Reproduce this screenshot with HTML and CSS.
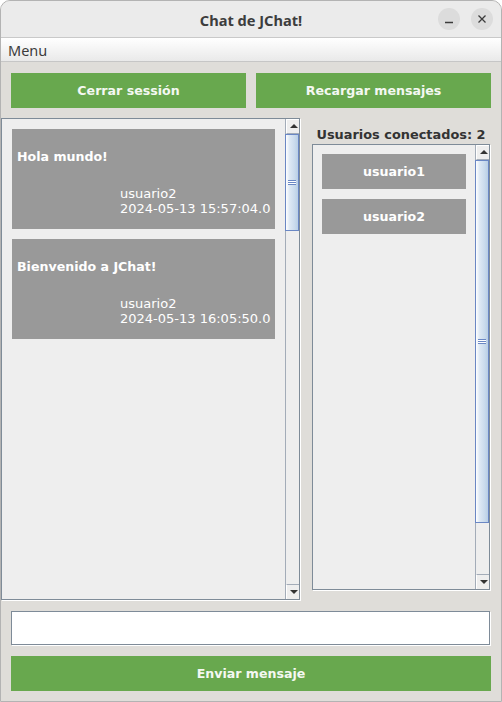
FILE: index.html
```html
<!DOCTYPE html>
<html lang="es">
<head>
<meta charset="utf-8">
<title>Chat de JChat!</title>
<link rel="stylesheet" href="styles.css">
</head>
<body>
<div class="window">
  <header class="titlebar">
    <span class="title">Chat de JChat!</span>
    <div class="controls">
      <span class="ctl"><svg width="22" height="22" viewBox="0 0 22 22"><path d="M7 14.5h8" stroke="#3b3b3b" stroke-width="1.3"/></svg></span>
      <span class="ctl"><svg width="22" height="22" viewBox="0 0 22 22"><path d="M7.5 7.5l7 7M14.5 7.5l-7 7" stroke="#3b3b3b" stroke-width="1.3"/></svg></span>
    </div>
  </header>
  <nav class="menubar"><span class="menu-item">Menu</span></nav>
  <main class="content">
    <div class="toprow">
      <button class="btn">Cerrar sessión</button>
      <button class="btn">Recargar mensajes</button>
    </div>
    <div class="middle">
      <div class="pane chat">
        <div class="viewport">
          <div class="card">
            <div class="msg">Hola mundo!</div>
            <div class="meta">usuario2<br>2024-05-13 15:57:04.0</div>
          </div>
          <div class="card">
            <div class="msg">Bienvenido a JChat!</div>
            <div class="meta">usuario2<br>2024-05-13 16:05:50.0</div>
          </div>
        </div>
        <div class="scrollbar">
          <div class="arrow up"></div>
          <div class="track"><div class="thumb thumb-chat"><span class="grip"></span></div></div>
          <div class="arrow down"></div>
        </div>
      </div>
      <div class="users">
        <div class="users-label">Usuarios conectados: 2</div>
        <div class="pane userlist">
          <div class="viewport list">
            <div class="user">usuario1</div>
            <div class="user">usuario2</div>
          </div>
          <div class="scrollbar">
            <div class="arrow up"></div>
            <div class="track"><div class="thumb thumb-users"><span class="grip"></span></div></div>
            <div class="arrow down"></div>
          </div>
        </div>
      </div>
    </div>
    <div class="input"></div>
    <button class="btn send">Enviar mensaje</button>
  </main>
</div>
</body>
</html>
```
FILE: styles.css
```css
* { box-sizing: border-box; }
html, body { margin: 0; padding: 0; background: #ffffff; }
body { width: 502px; height: 702px; overflow: hidden; }

.window {
  width: 502px;
  height: 702px;
  border: 1px solid #b3b3b3;
  border-radius: 10px 10px 0 0;
  background: #dfddd9;
  display: flex;
  flex-direction: column;
  overflow: hidden;
}

.titlebar {
  height: 37px;
  flex: none;
  background: #ebebeb;
  border-bottom: 1px solid #c9c9c9;
  position: relative;
  display: flex;
  align-items: center;
  justify-content: center;
}
.title {
  font-family: "Noto Sans", sans-serif;
  font-weight: 700;
  font-size: 14.6px;
  color: #3d3d3d;
  margin-top: 1px;
}
.controls {
  position: absolute;
  right: 8px;
  top: 7px;
  display: flex;
  gap: 11px;
}
.ctl {
  width: 22px;
  height: 22px;
  border-radius: 50%;
  background: #dcdcdc;
  display: block;
}
.ctl svg { display: block; }

.menubar {
  height: 24px;
  flex: none;
  background: linear-gradient(#ffffff, #e9e9e9);
  border-bottom: 1px solid #c6c6c6;
  display: flex;
  align-items: center;
  padding-left: 7px;
}
.menu-item {
  font-family: "Noto Sans", sans-serif;
  font-size: 14.5px;
  color: #3c3c3c;
}

.content {
  flex: 1;
  padding: 11px 10px 10px;
  display: flex;
  flex-direction: column;
}

.btn {
  border: none;
  margin: 0;
  padding: 0;
  background: #68a84e;
  color: #f4f8f2;
  font-family: "DejaVu Sans", sans-serif;
  font-weight: 700;
  font-size: 12.6px;
  height: 35px;
  cursor: pointer;
}
.toprow {
  display: flex;
  gap: 10px;
  flex: none;
}
.toprow .btn { flex: 1; }

.middle {
  display: flex;
  margin: 10px 0 0 -10px;
  height: 483px;
  flex: none;
}

.pane {
  border: 1px solid #7e8b98;
  box-shadow: 1px 1px 0 #ffffff;
  background: #eeeeee;
  display: flex;
}
.chat {
  width: 299px;
  height: 482px;
  margin-right: 12px;
}
.viewport {
  flex: 1;
  padding: 10px 10px 0 10px;
  display: flex;
  flex-direction: column;
  gap: 10px;
}

.card {
  height: 100px;
  background: #999999;
  color: #ffffff;
  font-family: "DejaVu Sans", sans-serif;
  font-size: 13px;
  display: flex;
  flex-direction: column;
  padding: 0 4px 0 5px;
}
.msg {
  font-weight: 700;
  font-size: 12.6px;
  line-height: 15px;
  margin-top: 20px;
}
.meta {
  margin-top: auto;
  margin-bottom: 13px;
  margin-left: 103px;
  line-height: 15px;
  white-space: nowrap;
}

.scrollbar {
  width: 14px;
  flex: none;
  border-left: 1px solid #a3acb8;
  display: flex;
  flex-direction: column;
  background: #eeeeee;
}
.arrow {
  height: 15px;
  flex: none;
  background: #eeeeee;
  border-top: 1px solid #ffffff;
  border-left: 1px solid #ffffff;
  position: relative;
}
.arrow.up { border-bottom: 1px solid #a3acb8; }
.arrow.down { border-top: 1px solid #a3acb8; }
.arrow::after {
  content: "";
  position: absolute;
  left: 3px;
  width: 0;
  height: 0;
  border-left: 4px solid transparent;
  border-right: 4px solid transparent;
}
.arrow.up::after { top: 4px; border-bottom: 4px solid #333333; }
.arrow.down::after { top: 5px; border-top: 4px solid #333333; }

.track {
  flex: 1;
  position: relative;
}
.thumb {
  position: absolute;
  left: -1px;
  right: 0;
  border: 1px solid #6a87c4;
  background: linear-gradient(to right, #ffffff 0%, #dde8f4 30%, #cadbed 70%, #b8cee5 100%);
  display: flex;
  align-items: center;
  justify-content: center;
}
.thumb-chat { top: 0; height: 97px; }
.thumb-users { top: 0; height: 363px; }
.grip {
  width: 8px;
  height: 5px;
  background: repeating-linear-gradient(#6a87c4 0 1px, #ffffff 1px 2px);
}

.users {
  width: 178px;
  display: flex;
  flex-direction: column;
}
.users-label {
  font-family: "DejaVu Sans", sans-serif;
  font-weight: 700;
  font-size: 12.9px;
  color: #333333;
  text-align: center;
  height: 16px;
  line-height: 16px;
  margin: 9px -10px 1px;
  white-space: nowrap;
}
.userlist {
  height: 446px;
}
.list {
  padding: 9px 9px 0 9px;
  gap: 10px;
}
.user {
  height: 35px;
  background: #999999;
  color: #ffffff;
  font-family: "DejaVu Sans", sans-serif;
  font-weight: 700;
  font-size: 12.6px;
  display: flex;
  align-items: center;
  justify-content: center;
}

.input {
  margin-top: 10px;
  height: 34px;
  flex: none;
  background: #ffffff;
  border: 1px solid #7e8b98;
  box-shadow: 1px 1px 0 #ffffff;
  width: 479px;
}
.send {
  margin-top: 11px;
  flex: none;
}
```
